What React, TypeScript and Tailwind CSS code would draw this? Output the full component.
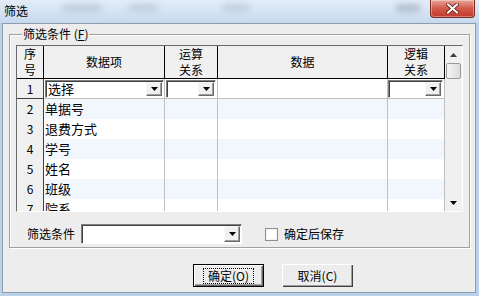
import React from 'react'

const rows = ['选择', '单据号', '退费方式', '学号', '姓名', '班级', '院系']

function Arrow() {
  return (
    <svg width="7" height="4" viewBox="0 0 7 4">
      <path d="M0 0h7L3.5 4z" fill="#000" />
    </svg>
  )
}

function DropButton() {
  return (
    <div className="flex h-full w-[16px] shrink-0 items-center justify-center border border-t-[#f8f8f8] border-l-[#f8f8f8] border-r-[#696969] border-b-[#696969] bg-[#f0f0f0] shadow-[inset_-1px_-1px_0_#a0a0a0]">
      <Arrow />
    </div>
  )
}

function Combo({ className, text }: { className: string; text?: string }) {
  return (
    <div
      className={`flex items-stretch border border-t-[#808080] border-l-[#808080] border-r-white border-b-white bg-white p-[1px] shadow-[inset_1px_1px_0_#404040] ${className}`}
    >
      <div className="flex flex-1 items-center pl-[1px] text-[13px] leading-[14px]">{text}</div>
      <DropButton />
    </div>
  )
}

function Scrollbar() {
  return (
    <div className="flex w-[17px] shrink-0 flex-col bg-[#f0f0f0]">
      <div className="flex h-[17px] items-center justify-center">
        <svg width="7" height="4" viewBox="0 0 7 4">
          <path d="M3.5 0L7 4H0z" fill="#3c3c3c" />
        </svg>
      </div>
      <div className="mx-[1px] h-[16px] rounded-[2px] border border-[#9a9a9a] bg-gradient-to-r from-[#f4f4f4] to-[#dcdcdc]" />
      <div className="flex-1" />
      <div className="flex h-[17px] items-center justify-center">
        <Arrow />
      </div>
    </div>
  )
}

export default function App() {
  const cols = 'grid grid-cols-[27px_121px_53px_170px_57px]'
  return (
    <div className="flex h-[296px] w-[479px] flex-col overflow-hidden bg-[#b9d1ea] font-['SimSun','Noto_Sans_CJK_SC',sans-serif] text-[12px] text-black">
      {/* Title bar */}
      <div className="relative flex h-[23px] shrink-0 items-start bg-gradient-to-b from-[#e4edf7] to-[#c6d9ee] pl-[4px] pt-[4px]">
        <span className="absolute left-[62px] top-[4px] h-[8px] w-[40px] rounded-full bg-[#9aa7b6] opacity-40 blur-[3px]" />
        <span className="absolute left-[128px] top-[4px] h-[7px] w-[30px] rounded-full bg-[#9aa7b6] opacity-40 blur-[3px]" />
        <span className="absolute left-[222px] top-[4px] h-[7px] w-[28px] rounded-full bg-[#9aa7b6] opacity-40 blur-[3px]" />
        <span className="absolute left-[396px] top-[4px] h-[8px] w-[24px] rounded-full bg-[#8a97a6] opacity-50 blur-[3px]" />
        <span className="relative text-[12px] leading-[14px]">筛选</span>
        <div className="absolute right-[4px] top-0 flex h-[18px] w-[45px] items-center justify-center rounded-b-[4px] border border-t-0 border-[#7a2a20] bg-gradient-to-b from-[#e8a598] via-[#d0594a] to-[#c2382a] shadow-[inset_0_0_0_1px_rgba(255,255,255,0.35)]">
          <svg width="13" height="11" viewBox="0 0 13 11">
            <path d="M2 1.5l9 8M11 1.5l-9 8" stroke="#5a1d16" strokeWidth="3.6" strokeLinecap="square" />
            <path d="M2 1.5l9 8M11 1.5l-9 8" stroke="#fff" strokeWidth="2" strokeLinecap="square" />
          </svg>
        </div>
      </div>

      {/* Client */}
      <div className="flex flex-1 pb-[3px] pl-[2px] pr-[3px]">
        <div className="flex flex-1 flex-col border border-[#8e9cad] bg-[#ededed]">
          {/* Group box */}
          <div className="relative ml-[6px] mt-[10px] flex h-[214px] w-[461px] flex-col border border-[#a0a0a0] shadow-[inset_1px_1px_0_#fff,1px_1px_0_#fff]">
            <span className="absolute -top-[8px] left-[12px] bg-[#ededed] px-[1px] leading-[14px]">
              筛选条件 (<span className="underline">F</span>)
            </span>

            {/* Grid */}
            <div className="ml-[6px] mt-[10px] flex h-[167px] w-[447px] border border-t-[#696969] border-l-[#696969] border-r-white border-b-white">
              <div className="h-[165px] w-[428px] overflow-hidden bg-white">
                <div className={`${cols} h-[33px] bg-[#f0f0f0] leading-[16px]`}>
                  <div className="flex flex-col items-center justify-center border-b border-r border-black">
                    <span>序</span>
                    <span>号</span>
                  </div>
                  <div className="flex items-center justify-center border-b border-r border-black">数据项</div>
                  <div className="flex flex-col items-center justify-center border-b border-r border-black">
                    <span>运算</span>
                    <span>关系</span>
                  </div>
                  <div className="flex items-center justify-center border-b border-r border-black">数据</div>
                  <div className="flex flex-col items-center justify-center border-b border-r border-black">
                    <span>逻辑</span>
                    <span>关系</span>
                  </div>
                </div>
                {rows.map((r, i) => {
                  const bg = i % 2 === 1 ? 'bg-[#f2f7fe]' : 'bg-white'
                  return (
                    <div key={i} className={`${cols} h-[20px]`}>
                      <div className="flex items-center justify-center border-b border-r border-[#404040] bg-[#f0f0f0]">
                        {i + 1}
                      </div>
                      {i === 0 ? (
                        <>
                          <div className="border-b border-r border-[#c0c0c0] bg-white pl-[1px] pt-[1px]">
                            <Combo className="h-[18px] w-[119px]" text={r} />
                          </div>
                          <div className="border-b border-r border-[#c0c0c0] bg-white pl-[1px] pt-[1px]">
                            <Combo className="h-[18px] w-[50px]" />
                          </div>
                          <div className="border-b border-r border-[#c0c0c0] bg-white" />
                          <div className="border-b border-r border-[#c0c0c0] bg-white pt-[1px]">
                            <Combo className="h-[18px] w-[55px]" />
                          </div>
                        </>
                      ) : (
                        <>
                          <div className={`flex items-center border-b border-r border-[#c0c0c0] pl-[1px] text-[13px] ${bg}`}>
                            {r}
                          </div>
                          <div className={`border-b border-r border-[#c0c0c0] ${bg}`} />
                          <div className={`border-b border-r border-[#c0c0c0] ${bg}`} />
                          <div className={`border-b border-r border-[#c0c0c0] ${bg}`} />
                        </>
                      )}
                    </div>
                  )
                })}
              </div>
              <Scrollbar />
            </div>

            {/* Saved filter row */}
            <div className="ml-[17px] mt-[12px] flex items-center">
              <span className="leading-[14px]">筛选条件</span>
              <Combo className="ml-[6px] h-[20px] w-[161px]" />
              <div className="ml-[23px] h-[13px] w-[13px] border border-[#8e8f8f] bg-white shadow-[inset_0_0_0_1px_#f4f4f4]" />
              <span className="ml-[6px] leading-[14px]">确定后保存</span>
            </div>
          </div>

          {/* Buttons */}
          <div className="ml-[190px] mt-[16px] flex gap-[18px]">
            <button className="flex h-[23px] w-[71px] items-center justify-center border border-black bg-[#ededed] shadow-[inset_1px_1px_0_#fff,inset_-1px_-1px_0_#696969,inset_-2px_-2px_0_#a0a0a0]">
              <span className="border border-dotted border-black px-[4px] leading-[14px]">确定(O)</span>
            </button>
            <button className="flex h-[23px] w-[71px] items-center justify-center bg-[#ededed] shadow-[inset_1px_1px_0_#fff,inset_-1px_-1px_0_#404040,inset_-2px_-2px_0_#a0a0a0]">
              <span className="leading-[14px]">取消(C)</span>
            </button>
          </div>
        </div>
      </div>
    </div>
  )
}
